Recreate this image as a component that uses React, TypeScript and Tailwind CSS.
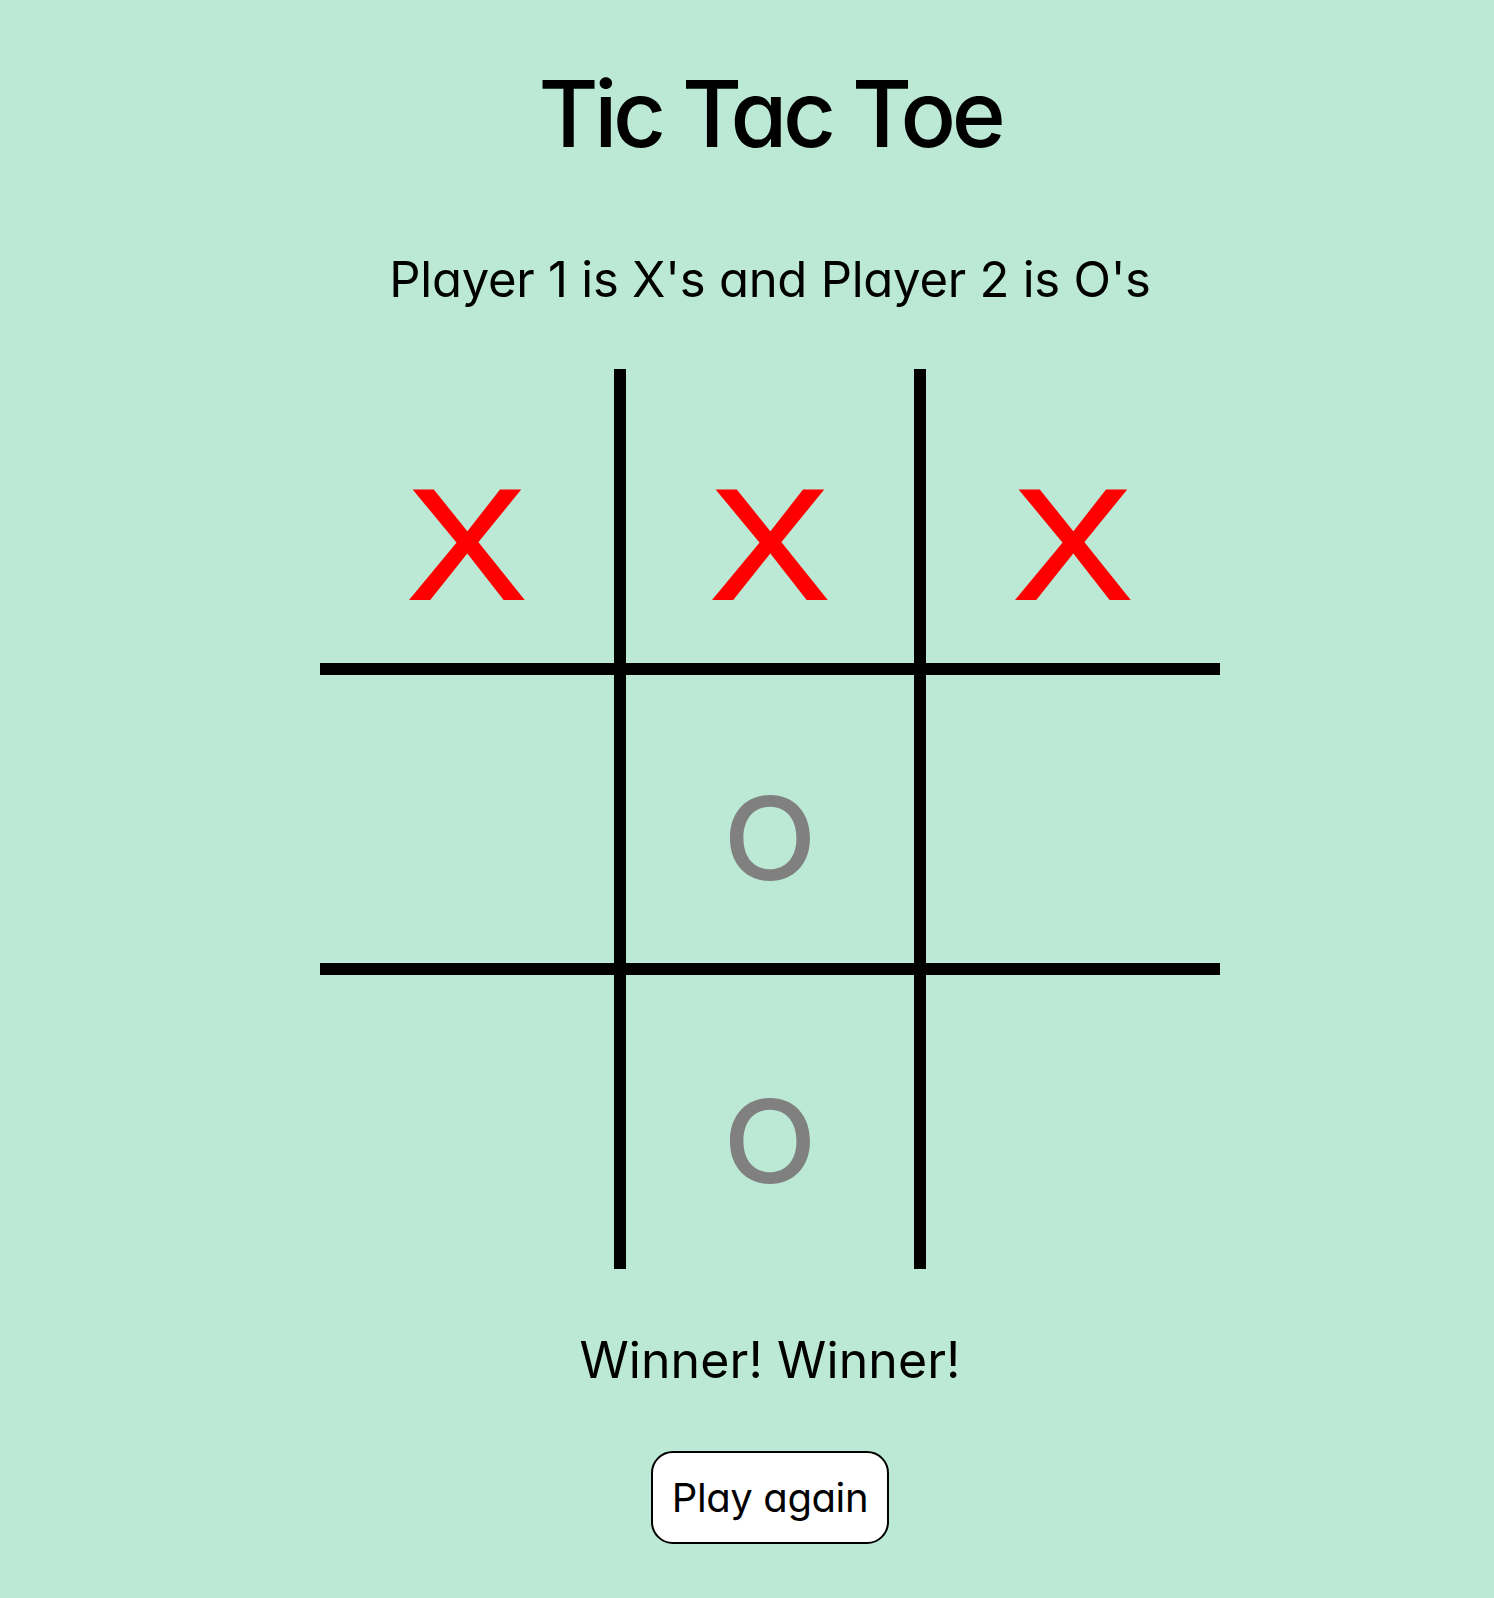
import React from "react";

type Mark = "X" | "O" | "";

const board: Mark[] = ["X", "X", "X", "", "O", "", "", "O", ""];

const cellBorders = [
  "border-r-[6px] border-b-[6px]",
  "border-l-[6px] border-r-[6px] border-b-[6px]",
  "border-l-[6px] border-b-[6px]",
  "border-r-[6px] border-t-[6px] border-b-[6px]",
  "border-l-[6px] border-r-[6px] border-t-[6px] border-b-[6px]",
  "border-l-[6px] border-t-[6px] border-b-[6px]",
  "border-r-[6px] border-t-[6px]",
  "border-l-[6px] border-r-[6px] border-t-[6px]",
  "border-l-[6px] border-t-[6px]",
];

export default function App() {
  return (
    <div className="min-h-screen w-full bg-[#bce9d5] font-[Inter,sans-serif] text-black [font-feature-settings:'cv11']">
      <div className="flex w-full flex-col items-center pl-[46px] pb-[53px] pt-[68px]">
        <h1 className="text-[92px] leading-none font-medium tracking-[-0.047em]">Tic Tac Toe</h1>
        <p className="mt-[95px] text-[49px] leading-none font-normal tracking-[-0.005em]">
          Player 1 is X&apos;s and Player 2 is O&apos;s
        </p>
        <div className="mt-[65px] grid grid-cols-[300px_300px_300px] grid-rows-[300px_300px_300px]">
          {board.map((m, i) => (
            <div
              key={i}
              className={`flex items-center justify-center border-black ${cellBorders[i]}`}
            >
              {m === "X" && (
                <span className="block scale-x-[1.13] pt-[56px] font-['Liberation_Sans',Arial,sans-serif] text-[158px] leading-none text-[#ff0000] [-webkit-text-stroke:2px_#ff0000]">
                  X
                </span>
              )}
              {m === "O" && (
                <span className="block scale-x-[1.06] pt-[38px] text-[115px] leading-none font-medium text-[#808080]">
                  O
                </span>
              )}
            </div>
          ))}
        </div>
        <p className="mt-[66px] text-[50px] leading-none font-normal tracking-[0.002em]">Winner! Winner!</p>
        <button
          type="button"
          className="mt-[66px] flex h-[93px] w-[238px] items-center justify-center rounded-[22px] border-2 border-black bg-white text-[40px] leading-none tracking-[-0.01em] text-black"
        >
          Play again
        </button>
      </div>
    </div>
  );
}
